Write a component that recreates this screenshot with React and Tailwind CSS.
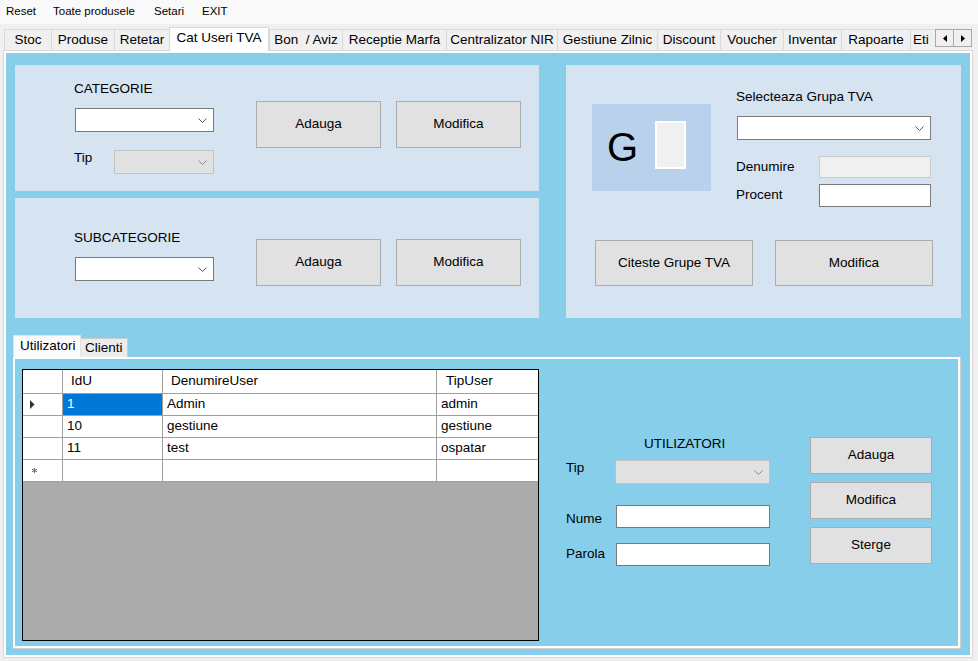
import React from "react";

const TABS = [
  ["Stoc", 47],
  ["Produse", 63],
  ["Retetar", 55],
  ["Cat Useri TVA", 100, true],
  ["Bon  / Aviz", 73],
  ["Receptie Marfa", 104],
  ["Centralizator NIR", 111],
  ["Gestiune Zilnic", 100],
  ["Discount", 63],
  ["Voucher", 63],
  ["Inventar", 58],
  ["Rapoarte", 69],
];

const USERS = [
  ["1", "Admin", "admin"],
  ["10", "gestiune", "gestiune"],
  ["11", "test", "ospatar"],
];

function Chevron({ color = "#555555" }) {
  return (
    <svg width="9" height="5" viewBox="0 0 9 5">
      <path d="M0.5 0.5L4.5 4.5L8.5 0.5" fill="none" stroke={color} strokeWidth="1" />
    </svg>
  );
}

function Combo({ className = "", disabled }) {
  return (
    <div
      className={`flex items-center justify-end pr-[6px] border ${
        disabled ? "bg-[#e1e1e1] border-[#c2c2c2]" : "bg-white border-[#7a7a7a]"
      } ${className}`}
    >
      <Chevron color={disabled ? "#8a8a8a" : "#555555"} />
    </div>
  );
}

function Btn({ className = "", children }) {
  return (
    <div
      className={`flex items-center justify-center bg-[#e1e1e1] border border-[#adadad] text-black ${className}`}
    >
      {children}
    </div>
  );
}

function ArrowBtn({ dir }) {
  return (
    <div className="w-[19px] h-[18px] flex items-center justify-center bg-[#f0f0f0] border border-[#a8a8a8] -ml-px first:ml-0">
      <svg width="4" height="7" viewBox="0 0 4 7">
        {dir === "left" ? <path d="M4 0L0 3.5L4 7Z" fill="#000" /> : <path d="M0 0L4 3.5L0 7Z" fill="#000" />}
      </svg>
    </div>
  );
}

function UsersGrid() {
  const cell = "border-r border-b border-[#a0a0a0] flex items-center h-[22px]";
  return (
    <div className="w-[517px] h-[272px] border border-black bg-[#ababab] flex flex-col">
      <div className="flex bg-white h-[24px]">
        <div className={`${cell} h-[24px] w-[40px]`} />
        <div className={`${cell} h-[24px] w-[100px] pl-[8px]`}>IdU</div>
        <div className={`${cell} h-[24px] w-[274px] pl-[8px]`}>DenumireUser</div>
        <div className="border-b border-[#a0a0a0] flex items-center h-[24px] w-[101px] pl-[9px]">TipUser</div>
      </div>
      {USERS.map((u, i) => (
        <div key={u[0]} className="flex bg-white">
          <div className={`${cell} w-[40px] pl-[7px]`}>
            {i === 0 && (
              <svg width="5" height="9" viewBox="0 0 5 9">
                <path d="M0 0L4.5 4.5L0 9Z" fill="#333" />
              </svg>
            )}
          </div>
          <div className={`${cell} w-[100px] pl-[4px] ${i === 0 ? "bg-[#0078d7] text-white" : ""}`}>{u[0]}</div>
          <div className={`${cell} w-[274px] pl-[4px]`}>{u[1]}</div>
          <div className="border-b border-[#a0a0a0] flex items-center h-[22px] w-[101px] pl-[4px]">{u[2]}</div>
        </div>
      ))}
      <div className="flex bg-white">
        <div className={`${cell} w-[40px] pl-[9px]`}>
          <svg width="5" height="5" viewBox="0 0 5 5">
            <path d="M2.5 0V5M0 1.2L5 3.8M0 3.8L5 1.2" stroke="#6b6b6b" strokeWidth="1" />
          </svg>
        </div>
        <div className={`${cell} w-[100px]`} />
        <div className={`${cell} w-[274px]`} />
        <div className="border-b border-[#a0a0a0] h-[22px] w-[101px]" />
      </div>
    </div>
  );
}

export default function App() {
  return (
    <div className="w-[978px] h-[661px] overflow-hidden bg-[#f0f0f0] text-black text-[13.5px] font-['Liberation_Sans',Arial,sans-serif]">
      {/* menu */}
      <div className="h-[24px] bg-[#f9f9f9] flex items-center pl-[6px] text-[11.5px]">
        <span className="w-[47px]">Reset</span>
        <span className="w-[101px]">Toate produsele</span>
        <span className="w-[48px]">Setari</span>
        <span>EXIT</span>
      </div>

      {/* main tabs */}
      <div className="h-[26px] flex items-end pl-[4px] relative z-10">
        {TABS.map(([label, w, active]) =>
          active ? (
            <div
              key={label}
              style={{ width: w }}
              className="h-[24px] -mb-px bg-white border border-b-0 border-[#d9d9d9] flex items-center justify-center pb-[3px] whitespace-pre"
            >
              {label}
            </div>
          ) : (
            <div
              key={label}
              style={{ width: w }}
              className="h-[21px] bg-[#f0f0f0] border-t border-l border-[#d9d9d9] flex items-center justify-center whitespace-pre"
            >
              {label}
            </div>
          )
        )}
        <div className="w-[25px] h-[21px] bg-[#f0f0f0] border-t border-l border-[#d9d9d9] flex items-center pl-[2px] whitespace-nowrap">
          Eti
        </div>
        <div className="self-start mt-[5px] flex">
          <ArrowBtn dir="left" />
          <ArrowBtn dir="right" />
        </div>
      </div>

      {/* tab page */}
      <div className="ml-[3px] w-[970px] h-[608px] border border-[#d9d9d9] bg-white p-[2px]">
        <div className="h-full bg-[#87ceeb] pt-[12px]">
          <div className="flex ml-[9px]">
            <div className="flex flex-col gap-[7px]">
              {/* categorie */}
              <div className="w-[524px] h-[126px] bg-[#d6e4f2] flex">
                <div className="w-[199px] shrink-0 pl-[59px] pt-[16px]">
                  <div className="leading-[16px]">CATEGORIE</div>
                  <Combo className="mt-[11px] ml-[1px] w-[139px] h-[24px]" />
                  <div className="mt-[18px] flex justify-between items-start">
                    <span className="leading-[16px]">Tip</span>
                    <Combo disabled className="w-[100px] h-[24px]" />
                  </div>
                </div>
                <Btn className="ml-[42px] mt-[36px] w-[125px] h-[47px]">Adauga</Btn>
                <Btn className="ml-[15px] mt-[36px] w-[125px] h-[47px]">Modifica</Btn>
              </div>
              {/* subcategorie */}
              <div className="w-[524px] h-[120px] bg-[#d6e4f2] flex">
                <div className="w-[199px] shrink-0 pl-[59px] pt-[32px]">
                  <div className="leading-[16px]">SUBCATEGORIE</div>
                  <Combo className="mt-[11px] ml-[1px] w-[139px] h-[24px]" />
                </div>
                <Btn className="ml-[42px] mt-[41px] w-[125px] h-[47px]">Adauga</Btn>
                <Btn className="ml-[15px] mt-[41px] w-[125px] h-[47px]">Modifica</Btn>
              </div>
            </div>

            {/* grupe TVA */}
            <div className="ml-[27px] w-[395px] h-[253px] bg-[#d6e4f2]">
              <div className="flex h-[141px]">
                <div className="ml-[26px] mt-[39px] w-[119px] h-[87px] bg-[#b9d1ea] flex items-start">
                  <span className="ml-[15px] mt-[23px] text-[40px] leading-none">G</span>
                  <div className="ml-auto mr-[25px] mt-[17px] w-[31px] h-[48px] bg-[#f0f0f0] border-2 border-white" />
                </div>
                <div className="ml-[25px] pt-[24px] w-[195px]">
                  <div className="leading-[16px]">Selecteaza Grupa TVA</div>
                  <Combo className="mt-[11px] ml-[1px] w-[194px] h-[24px]" />
                  <div className="mt-[16px] flex items-center justify-between">
                    <span>Denumire</span>
                    <div className="w-[112px] h-[22px] bg-[#f0f0f0] border border-[#cccccc]" />
                  </div>
                  <div className="mt-[6px] flex items-center justify-between">
                    <span>Procent</span>
                    <div className="w-[112px] h-[23px] bg-white border border-[#7a7a7a]" />
                  </div>
                </div>
              </div>
              <div className="flex pl-[29px] mt-[34px]">
                <Btn className="w-[158px] h-[46px]">Citeste Grupe TVA</Btn>
                <Btn className="ml-[22px] w-[158px] h-[46px]">Modifica</Btn>
              </div>
            </div>
          </div>

          {/* inner tabs */}
          <div className="mt-[17px] ml-[7px]">
            <div className="flex items-end h-[22px]">
              <div className="w-[68px] h-[22px] bg-[#fcfcfc] border-t border-l border-r border-[#e3e3e3] flex items-center pl-[6px] pb-[1px]">
                Utilizatori
              </div>
              <div className="w-[47px] h-[19px] bg-[#ececec] border-t border-r border-[#cccccc] flex items-center pl-[4px]">
                Clienti
              </div>
            </div>
            <div className="w-[948px] h-[292px] border-r border-b border-[#cfcfcf]">
              <div className="h-full border-2 border-white bg-[#87ceeb] flex items-start">
                <div className="ml-[7px] mt-[10px]">
                  <UsersGrid />
                </div>

                <div className="ml-[27px] mt-[77px] w-[204px]">
                  <div className="ml-[78px] leading-[16px]">UTILIZATORI</div>
                  <div className="mt-[8px] flex items-start">
                    <span className="w-[49px] leading-[16px]">Tip</span>
                    <Combo disabled className="w-[155px] h-[24px]" />
                  </div>
                  <div className="mt-[21px] flex items-start">
                    <span className="w-[50px] pt-[6px] leading-[16px]">Nume</span>
                    <div className="w-[155px] h-[23px] bg-white border border-[#7a7a7a]" />
                  </div>
                  <div className="mt-[15px] flex items-center">
                    <span className="w-[50px]">Parola</span>
                    <div className="w-[155px] h-[23px] bg-white border border-[#7a7a7a]" />
                  </div>
                </div>

                <div className="ml-[40px] mt-[78px] flex flex-col gap-[8px]">
                  <Btn className="w-[122px] h-[37px]">Adauga</Btn>
                  <Btn className="w-[122px] h-[37px]">Modifica</Btn>
                  <Btn className="w-[122px] h-[37px]">Sterge</Btn>
                </div>
              </div>
            </div>
          </div>
        </div>
      </div>
    </div>
  );
}
